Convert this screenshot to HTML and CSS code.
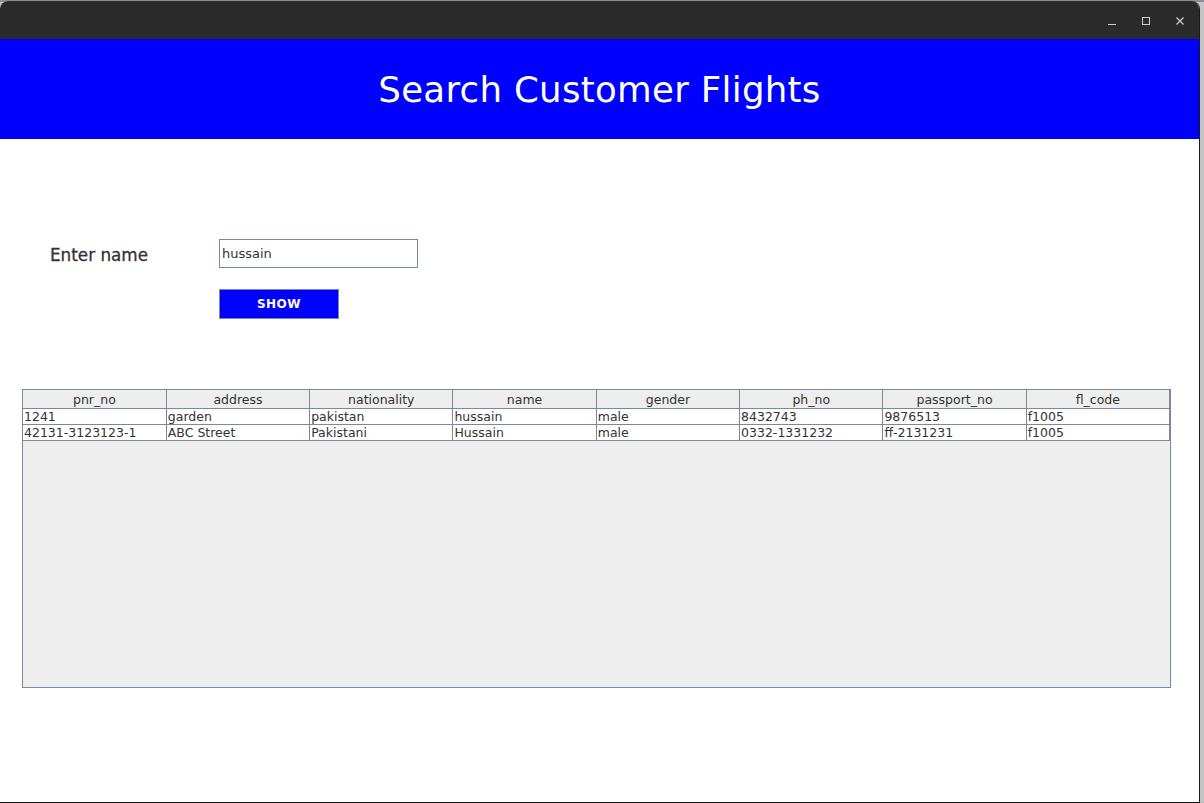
FILE: index.html
```html
<!DOCTYPE html>
<html>
<head>
<meta charset="utf-8">
<link rel="stylesheet" href="styles.css">
</head>
<body>
<div class="desktop">
  <div class="window">
    <div class="titlebar">
      <div class="controls">
        <svg class="ctl" width="14" height="14" viewBox="0 0 14 14"><line x1="3" y1="10.5" x2="11" y2="10.5" stroke="#d0d0d0" stroke-width="1"/></svg>
        <svg class="ctl" width="14" height="14" viewBox="0 0 14 14"><rect x="3.5" y="3.5" width="7" height="7" fill="none" stroke="#d0d0d0" stroke-width="1"/></svg>
        <svg class="ctl" width="14" height="14" viewBox="0 0 14 14"><path d="M3.5 3.5 L10.5 10.5 M10.5 3.5 L3.5 10.5" stroke="#d0d0d0" stroke-width="1.2"/></svg>
      </div>
    </div>
    <div class="content">
      <div class="header"><h1>Search Customer Flights</h1></div>
      <div class="form">
        <div class="row">
          <label class="lbl">Enter name</label>
          <div class="input">hussain</div>
        </div>
        <div class="row">
          <span class="lbl"></span>
          <button class="btn">SHOW</button>
        </div>
      </div>
      <div class="tablewrap">
        <table class="grid">
          <thead>
            <tr><th>pnr_no</th><th>address</th><th>nationality</th><th>name</th><th>gender</th><th>ph_no</th><th>passport_no</th><th>fl_code</th></tr>
          </thead>
          <tbody>
            <tr><td>1241</td><td>garden</td><td>pakistan</td><td>hussain</td><td>male</td><td>8432743</td><td>9876513</td><td>f1005</td></tr>
            <tr><td>42131-3123123-1</td><td>ABC Street</td><td>Pakistani</td><td>Hussain</td><td>male</td><td>0332-1331232</td><td>ff-2131231</td><td>f1005</td></tr>
          </tbody>
        </table>
      </div>
    </div>
  </div>
</div>
</body>
</html>
```
FILE: styles.css
```css
html, body { margin: 0; padding: 0; }
body { width: 1204px; height: 803px; overflow: hidden; background: #b8b8b8; font-family: "DejaVu Sans", sans-serif; }
.desktop { padding-top: 1px; height: 802px; box-sizing: border-box; background: linear-gradient(#8a8f96 0, #8a8f96 2px, #c4c4c4 2px); }
.window { width: 1200px; height: 802px; box-sizing: border-box; border-right: 1px solid #1a1a1a; border-bottom: 1px solid #111; display: flex; flex-direction: column; background: #fff; border-radius: 8px 8px 0 0; overflow: hidden; }
.titlebar { height: 38px; flex: none; background: #2b2b2b; display: flex; justify-content: flex-end; align-items: center; }
.controls { display: flex; gap: 20px; padding-right: 12px; padding-top: 1px; }
.ctl { display: block; }
.content { flex: 1; background: #fff; }
.header { height: 100px; background: #0000ff; display: flex; align-items: center; justify-content: center; }
.header h1 { margin: 0; color: #fff; font-weight: normal; font-size: 35.6px; letter-spacing: 0.3px; padding-top: 1px; }
.form { padding: 100px 0 0 50px; height: 151px; box-sizing: border-box; }
.row { display: flex; align-items: center; margin-bottom: 21px; }
.lbl { width: 169px; font-size: 16.8px; color: #333; font-weight: 500; -webkit-text-stroke: 0.3px #333; padding-top: 2px; }
.input { width: 199px; height: 29px; box-sizing: border-box; border: 1px solid #7a8a99; font-size: 13px; color: #333; padding-left: 2px; line-height: 27px; }
.btn { width: 120px; height: 30px; background: #0000ff; border: 1px solid #7a8a99; color: #fff; font-family: "DejaVu Sans", sans-serif; font-weight: bold; font-size: 12px; letter-spacing: 0.5px; padding: 0; }
.tablewrap { margin: 99px 0 0 22px; width: 1149px; height: 299px; box-sizing: border-box; border: 1px solid #7a8a99; background: #eeeeee; }
.grid { width: 1147px; border-collapse: collapse; table-layout: fixed; font-size: 12.5px; color: #333; }
.grid th { background: #eeeeee; font-weight: normal; height: 18px; padding: 0; border: 1px solid #7a8a99; border-top: none; text-align: center; line-height: 17px; }
.grid td { background: #fff; height: 15px; padding: 0 0 0 1px; border: 1px solid #7a8a99; line-height: 15px; white-space: nowrap; overflow: hidden; }
.grid th:first-child, .grid td:first-child { border-left: none; }
.grid th:last-child, .grid td:last-child { border-right: 1px solid #7a8a99; }
```
